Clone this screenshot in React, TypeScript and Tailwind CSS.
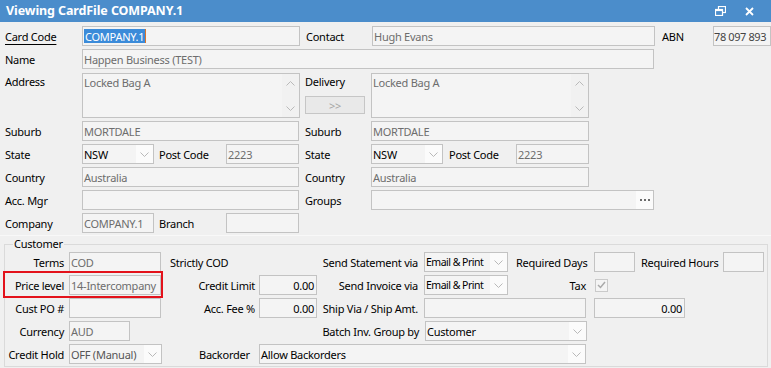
import type { ReactNode } from 'react';

interface CellProps {
  className?: string;
  children?: ReactNode;
}

function Chevron({ up = false }: { up?: boolean }) {
  return (
    <svg width="9" height="5" viewBox="0 0 9 5" className="block">
      <polyline
        points={up ? '0.5,4.5 4.5,0.5 8.5,4.5' : '0.5,0.5 4.5,4.5 8.5,0.5'}
        fill="none"
        stroke="#b9b9b9"
        strokeWidth="1"
      />
    </svg>
  );
}

function Label({ className = '', children }: CellProps) {
  return (
    <div className={`flex h-[20px] shrink-0 items-center whitespace-nowrap text-black ${className}`}>
      {children}
    </div>
  );
}

function Field({ className = '', children }: CellProps) {
  return (
    <div
      className={`flex h-[20px] shrink-0 items-center overflow-hidden whitespace-nowrap border border-[#c3c3c3] bg-[#f4f4f4] ${className}`}
    >
      {children}
    </div>
  );
}

function Select({
  className = '',
  value,
  dim = false,
  textClass = '',
}: {
  className?: string;
  value: string;
  dim?: boolean;
  textClass?: string;
}) {
  return (
    <div className={`flex h-[20px] shrink-0 border border-[#c3c3c3] bg-[#f4f4f4] ${className}`}>
      <div
        className={`flex flex-1 items-center overflow-hidden whitespace-nowrap px-[1px] ${
          dim ? 'text-[#555]' : 'text-black'
        } ${textClass}`}
      >
        {value}
      </div>
      <div className="flex w-[17px] items-center justify-center bg-[#fbfbfb]">
        <Chevron />
      </div>
    </div>
  );
}

function TextArea({ value }: { value: string }) {
  return (
    <div className="flex h-[45px] w-[218px] shrink-0 border border-[#c3c3c3] bg-[#f4f4f4]">
      <div className="flex-1 px-[1px] pt-[3px] text-[#6d6d6d]">{value}</div>
      <div className="flex w-[17px] flex-col items-center justify-between bg-[#f1f1f1] pb-[6px] pt-[7px]">
        <Chevron up />
        <Chevron />
      </div>
    </div>
  );
}

function Row({ className = '', children }: CellProps) {
  return <div className={`flex items-center ${className}`}>{children}</div>;
}

const grey = 'px-[1px] text-[#6d6d6d]';
const num = 'justify-end px-[2px] text-black';

export default function App() {
  return (
    <div className="h-[368px] w-[771px] overflow-hidden bg-[#f0f0f0] font-['Noto_Sans',sans-serif] text-[11px] leading-none tracking-[-0.25px]">
      {/* title bar */}
      <div className="flex h-[22px] items-center bg-[#4b8dcb] pl-[6px] pr-[17px] text-white">
        <span className="flex-1 text-[12.5px] font-bold tracking-[-0.1px]">Viewing CardFile COMPANY.1</span>
        <svg width="11" height="10" viewBox="0 0 11 10" className="mr-[19px]">
          <rect x="3.5" y="0.5" width="7" height="6" fill="none" stroke="white" strokeWidth="1.2" />
          <rect x="0.5" y="3.5" width="7" height="6" fill="#4b8dcb" stroke="white" strokeWidth="1.2" />
          <rect x="0.5" y="3.5" width="7" height="1.6" fill="white" />
        </svg>
        <svg width="9" height="9" viewBox="0 0 9 9">
          <path d="M1 1 L8 8 M8 1 L1 8" stroke="white" strokeWidth="1.8" />
        </svg>
      </div>

      {/* address section */}
      <div className="flex flex-col gap-[3px] pl-[5px] pt-[4px]">
        <Row>
          <Label className="w-[77px]">
            <span className="underline underline-offset-[3px]">Card Code</span>
          </Label>
          <Field className="w-[218px] border-[#a8a8a8] px-[1px]">
            <span className="flex h-[14px] items-center bg-[#3b8bd9] px-[1px] text-white">COMPANY.1</span>
            <span className="h-[14px] w-[1px] bg-[#d9752c]" />
          </Field>
          <Label className="ml-[6px] w-[66px]">Contact</Label>
          <Field className={`w-[283px] ${grey}`}>Hugh Evans</Field>
          <Label className="ml-[7px] w-[51px]">ABN</Label>
          <Field className="w-[58px] tracking-[-0.4px] text-[#444]">78 097 893</Field>
        </Row>
        <Row>
          <Label className="w-[77px]">Name</Label>
          <Field className={`w-[572px] ${grey}`}>Happen Business (TEST)</Field>
        </Row>
        <Row className="mt-[1px] items-start">
          <div className="w-[77px] shrink-0 pt-[3px] text-black">Address</div>
          <TextArea value="Locked Bag A" />
          <div className="ml-[5px] flex w-[66px] shrink-0 flex-col">
            <div className="pt-[3px] text-black">Delivery</div>
            <div className="mt-[9px] flex h-[18px] w-[60px] items-center justify-center border border-[#c6c6c6] bg-[#e9e9e9] text-[#a5a5a5]">
              &gt;&gt;
            </div>
          </div>
          <TextArea value="Locked Bag A" />
        </Row>
        <Row>
          <Label className="w-[77px]">Suburb</Label>
          <Field className={`w-[217px] ${grey}`}>MORTDALE</Field>
          <Label className="ml-[6px] w-[66px]">Suburb</Label>
          <Field className={`w-[218px] ${grey}`}>MORTDALE</Field>
        </Row>
        <Row>
          <Label className="w-[77px]">State</Label>
          <Select className="w-[72px]" value="NSW" />
          <Label className="ml-[5px] w-[67px]">Post Code</Label>
          <Field className={`w-[73px] ${grey}`}>2223</Field>
          <Label className="ml-[6px] w-[66px]">State</Label>
          <Select className="w-[72px]" value="NSW" />
          <Label className="ml-[6px] w-[67px]">Post Code</Label>
          <Field className={`w-[73px] ${grey}`}>2223</Field>
        </Row>
        <Row>
          <Label className="w-[77px]">Country</Label>
          <Field className={`w-[217px] ${grey}`}>Australia</Field>
          <Label className="ml-[6px] w-[66px]">Country</Label>
          <Field className={`w-[218px] ${grey}`}>Australia</Field>
        </Row>
        <Row>
          <Label className="w-[77px]">Acc. Mgr</Label>
          <Field className="w-[217px]" />
          <Label className="ml-[6px] w-[66px]">Groups</Label>
          <div className="flex h-[20px] w-[283px] border border-[#c3c3c3] bg-[#f4f4f4]">
            <div className="flex-1" />
            <div className="flex w-[17px] items-center justify-center gap-[2px] bg-[#fbfbfb]">
              <span className="h-[2px] w-[2px] bg-[#6b6b6b]" />
              <span className="h-[2px] w-[2px] bg-[#6b6b6b]" />
              <span className="h-[2px] w-[2px] bg-[#6b6b6b]" />
            </div>
          </div>
        </Row>
        <Row>
          <Label className="w-[77px]">Company</Label>
          <Field className={`w-[72px] ${grey}`}>COMPANY.1</Field>
          <Label className="ml-[5px] w-[67px]">Branch</Label>
          <Field className="w-[73px]" />
        </Row>
      </div>

      {/* customer group */}
      <div className="mt-[2px] border-t border-[#f8f8f8] pl-[4px] pr-[3px] pt-[1px]">
        <fieldset className="border border-[#dadada] pb-[2px]">
          <legend className="ml-[8px] px-[1px] leading-[14px] text-black">Customer</legend>
          <div className="flex flex-col gap-[3px] pt-[1px]">
            <Row>
              <Label className="w-[59px] justify-end">Terms</Label>
              <Field className={`ml-[5px] w-[92px] ${grey}`}>COD</Field>
              <div className="ml-[9px] flex w-[248px] justify-between">
                <span>Strictly COD</span>
                <span>Send Statement via</span>
              </div>
              <Select
                className="ml-[6px] w-[84px]"
                value="Email & Print"
                textClass="text-[10.5px] tracking-[-0.5px]"
              />
              <Label className="ml-[8px] w-[78px]">Required Days</Label>
              <Field className="w-[41px]" />
              <Label className="ml-[6px] w-[82px]">Required Hours</Label>
              <Field className="w-[41px]" />
            </Row>
            <Row className="relative">
              <div className="absolute left-[-2px] top-[-4px] h-[27px] w-[160px] border-2 border-[#e3121b]" />
              <Label className="w-[59px] justify-end">Price level</Label>
              <Field className={`ml-[5px] w-[92px] ${grey}`}>14-Intercompany</Field>
              <Label className="w-[94px] justify-end">Credit Limit</Label>
              <Field className={`ml-[4px] w-[58px] ${num}`}>0.00</Field>
              <Label className="w-[101px] justify-end">Send Invoice via</Label>
              <Select
                className="ml-[6px] w-[84px]"
                value="Email & Print"
                textClass="text-[10.5px] tracking-[-0.5px]"
              />
              <Label className="w-[78px] justify-end">Tax</Label>
              <div className="ml-[9px] flex h-[13px] w-[13px] items-center justify-center border border-[#cacaca] bg-[#f4f4f4]">
                <svg width="9" height="8" viewBox="0 0 9 8">
                  <polyline points="1,4 3.5,6.5 8,1" fill="none" stroke="#a9a9a9" strokeWidth="1.5" />
                </svg>
              </div>
            </Row>
            <Row>
              <Label className="w-[59px] justify-end">Cust PO #</Label>
              <Field className="ml-[5px] w-[92px]" />
              <Label className="w-[94px] justify-end">Acc. Fee %</Label>
              <Field className={`ml-[4px] w-[58px] ${num}`}>0.00</Field>
              <Label className="w-[101px] justify-end">Ship Via / Ship Amt.</Label>
              <Field className="ml-[6px] w-[162px]" />
              <Field className={`ml-[8px] w-[91px] ${num}`}>0.00</Field>
            </Row>
            <Row>
              <Label className="w-[59px] justify-end">Currency</Label>
              <Field className={`ml-[5px] w-[61px] ${grey}`}>AUD</Field>
              <Label className="w-[289px] justify-end">Batch Inv. Group by</Label>
              <Select className="ml-[6px] w-[162px]" value="Customer" />
            </Row>
            <Row>
              <Label className="w-[59px] justify-end">Credit Hold</Label>
              <Select className="ml-[5px] w-[93px]" value="OFF (Manual)" dim />
              <Label className="w-[97px] pl-[37px]">Backorder</Label>
              <Select className="w-[327px]" value="Allow Backorders" />
            </Row>
          </div>
        </fieldset>
      </div>
    </div>
  );
}
